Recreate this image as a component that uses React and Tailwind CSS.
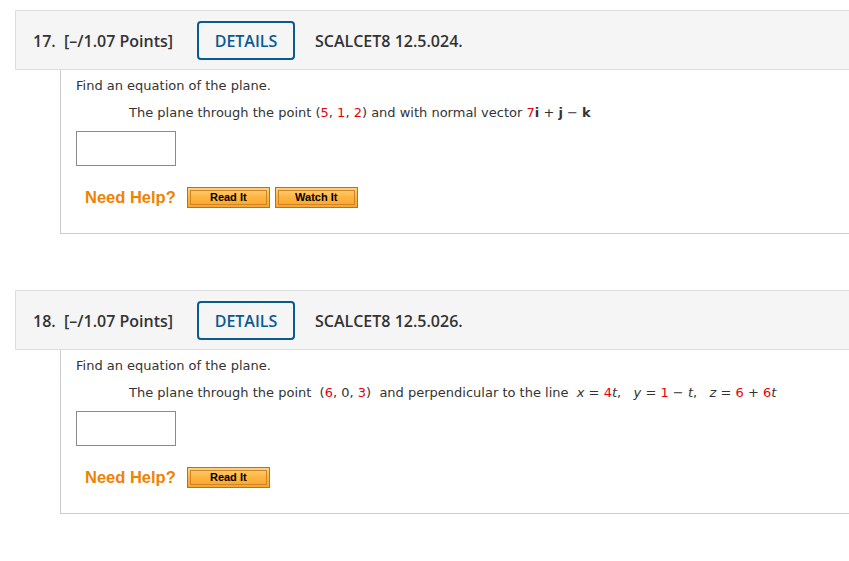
import React from 'react';

const HelpButton = ({ label }) => (
  <div className="h-[21px] w-[83px] border border-[#b3722c] bg-gradient-to-b from-[#ffd27a] via-[#ffb43e] to-[#f9a52e] p-[2px]">
    <div className="flex h-full w-full items-center justify-center border border-[#cf8427] text-[11px] font-bold leading-none text-black [font-family:'Liberation_Sans',Arial,sans-serif]">
      {label}
    </div>
  </div>
);

const Red = ({ children }) => <span className="text-[#e8000b]">{children}</span>;

const Question = ({ number, code, children, buttons, first }) => (
  <div className={first ? '' : 'mt-[56px]'}>
    <div className="flex h-[60px] items-center border-y border-l border-[#dddddd] bg-[#f5f5f5] pl-[17px] pt-[1px] text-[16px] font-semibold text-[#333] [font-family:'Open_Sans',sans-serif]">
      <span className="w-[31px]">{number}.</span>
      <span className="w-[133px]">[–/1.07 Points]</span>
      <div className="flex h-[39px] w-[98px] items-center justify-center rounded-[4px] border-2 border-[#0a5a92] text-[#0a5a92]">
        DETAILS
      </div>
      <span className="ml-[20px]">{code}</span>
    </div>
    <div className="ml-[45px] border-b border-l border-[#cccccc] pb-[25px] pl-[15px] pt-[7px] text-[13px] text-[#333] [font-family:Tahoma,'DejaVu_Sans',sans-serif]">
      <div className="h-[18px] leading-[18px]">Find an equation of the plane.</div>
      <div className="mt-[9px] h-[18px] whitespace-pre pl-[53px] leading-[18px]">{children}</div>
      <div className="mt-[9px] h-[35px] w-[100px] border border-[#8a8a8a] bg-white" />
      <div className="mt-[21px] flex h-[21px] items-center pl-[9px]">
        <span className="text-[16.5px] font-bold leading-none text-[#ef8200] [font-family:'Liberation_Sans',Arial,sans-serif]">
          Need Help?
        </span>
        <div className="ml-[11px] flex gap-[5px]">
          {buttons.map((b) => (
            <HelpButton key={b} label={b} />
          ))}
        </div>
      </div>
    </div>
  </div>
);

const App = () => {
  return (
    <div className="min-h-screen bg-white pl-[15px] pt-[10px]">
      <Question number="17" code="SCALCET8 12.5.024." buttons={['Read It', 'Watch It']} first>
        The plane through the point (<Red>5</Red>, <Red>1</Red>, <Red>2</Red>) and with normal vector{' '}
        <Red>7</Red>
        <b>i</b> + <b>j</b> − <b>k</b>
      </Question>
      <Question number="18" code="SCALCET8 12.5.026." buttons={['Read It']}>
        {'The plane through the point  ('}
        <Red>6</Red>, 0, <Red>3</Red>
        {')  and perpendicular to the line  '}
        <i>x</i> = <Red>4</Red>
        <i>t</i>
        {',   '}
        <i>y</i> = <Red>1</Red> − <i>t</i>
        {',   '}
        <i>z</i> = <Red>6</Red> + <Red>6</Red>
        <i>t</i>
      </Question>
    </div>
  );
};

export default App;
